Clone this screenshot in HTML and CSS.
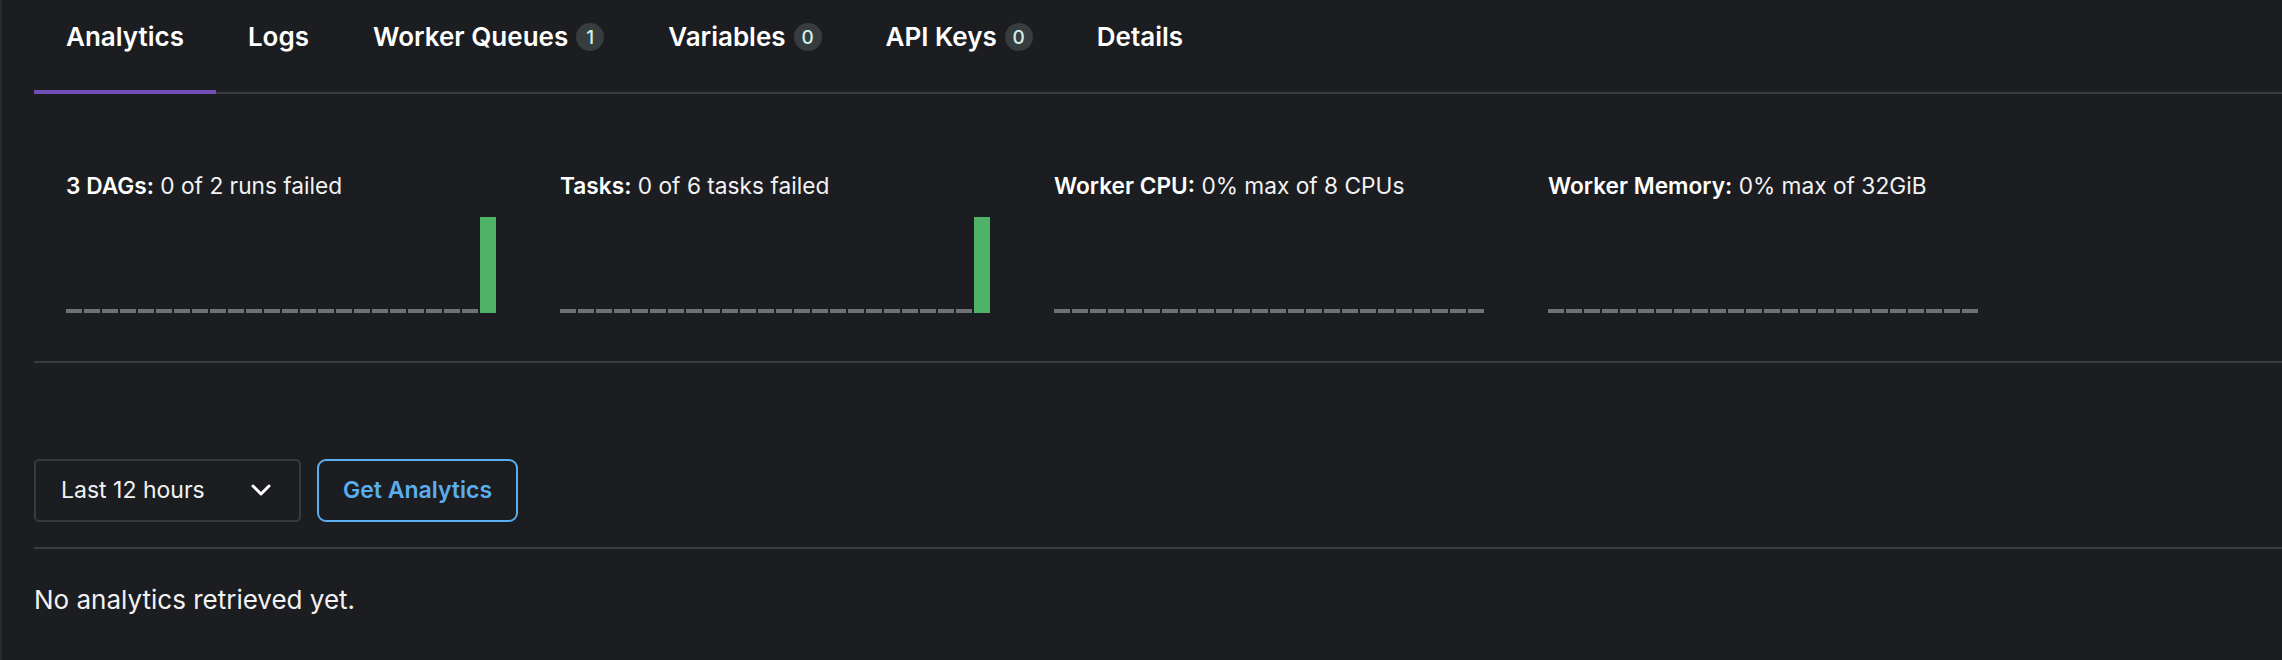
FILE: index.html
```html
<!DOCTYPE html>
<html lang="en">
<head>
<meta charset="utf-8">
<title>Analytics</title>
<link rel="stylesheet" href="styles.css">
</head>
<body>
<div class="page">
  <nav class="tabs">
    <div class="tab active">Analytics</div>
    <div class="tab">Logs</div>
    <div class="tab">Worker Queues<span class="badge">1</span></div>
    <div class="tab">Variables<span class="badge">0</span></div>
    <div class="tab">API Keys<span class="badge">0</span></div>
    <div class="tab">Details</div>
  </nav>

  <section class="charts">
    <div class="chart">
      <div class="chart-title"><b>3 DAGs:</b> 0 of 2 runs failed</div>
      <div class="bars">
        <span class="bar"></span><span class="bar"></span><span class="bar"></span><span class="bar"></span><span class="bar"></span><span class="bar"></span><span class="bar"></span><span class="bar"></span><span class="bar"></span><span class="bar"></span><span class="bar"></span><span class="bar"></span><span class="bar"></span><span class="bar"></span><span class="bar"></span><span class="bar"></span><span class="bar"></span><span class="bar"></span><span class="bar"></span><span class="bar"></span><span class="bar"></span><span class="bar"></span><span class="bar"></span><span class="bar ok"></span>
      </div>
    </div>
    <div class="chart">
      <div class="chart-title"><b>Tasks:</b> 0 of 6 tasks failed</div>
      <div class="bars">
        <span class="bar"></span><span class="bar"></span><span class="bar"></span><span class="bar"></span><span class="bar"></span><span class="bar"></span><span class="bar"></span><span class="bar"></span><span class="bar"></span><span class="bar"></span><span class="bar"></span><span class="bar"></span><span class="bar"></span><span class="bar"></span><span class="bar"></span><span class="bar"></span><span class="bar"></span><span class="bar"></span><span class="bar"></span><span class="bar"></span><span class="bar"></span><span class="bar"></span><span class="bar"></span><span class="bar ok"></span>
      </div>
    </div>
    <div class="chart">
      <div class="chart-title"><b>Worker CPU:</b> 0% max of 8 CPUs</div>
      <div class="bars">
        <span class="bar"></span><span class="bar"></span><span class="bar"></span><span class="bar"></span><span class="bar"></span><span class="bar"></span><span class="bar"></span><span class="bar"></span><span class="bar"></span><span class="bar"></span><span class="bar"></span><span class="bar"></span><span class="bar"></span><span class="bar"></span><span class="bar"></span><span class="bar"></span><span class="bar"></span><span class="bar"></span><span class="bar"></span><span class="bar"></span><span class="bar"></span><span class="bar"></span><span class="bar"></span><span class="bar"></span>
      </div>
    </div>
    <div class="chart">
      <div class="chart-title"><b>Worker Memory:</b> 0% max of 32GiB</div>
      <div class="bars">
        <span class="bar"></span><span class="bar"></span><span class="bar"></span><span class="bar"></span><span class="bar"></span><span class="bar"></span><span class="bar"></span><span class="bar"></span><span class="bar"></span><span class="bar"></span><span class="bar"></span><span class="bar"></span><span class="bar"></span><span class="bar"></span><span class="bar"></span><span class="bar"></span><span class="bar"></span><span class="bar"></span><span class="bar"></span><span class="bar"></span><span class="bar"></span><span class="bar"></span><span class="bar"></span><span class="bar"></span>
      </div>
    </div>
  </section>

  <div class="controls">
    <div class="select">
      <span>Last 12 hours</span>
      <svg class="chevron" width="20" height="12" viewBox="0 0 20 12"><path d="M2 2 L10 10 L18 2" fill="none" stroke="#ffffff" stroke-width="3" stroke-linecap="round" stroke-linejoin="round"/></svg>
    </div>
    <button class="btn">Get Analytics</button>
  </div>

  <p class="empty">No analytics retrieved yet.</p>
</div>
</body>
</html>
```

FILE: styles.css
```css
html, body {
  margin: 0;
  padding: 0;
  background: #1c1d21;
}

body {
  font-family: Inter, "Noto Sans", sans-serif;
  color: #f2f2f3;
  font-size: 23px;
  line-height: 34.5px;
}

.page {
  min-height: 660px;
  border-left: 2px solid #2b2c30;
  padding-left: 32px;
  box-sizing: border-box;
}

.tabs {
  display: flex;
  border-bottom: 2px solid #3a3b3f;
}

.tab {
  display: flex;
  align-items: center;
  padding: 19px 32px 35px;
  line-height: 36px;
  font-size: 26px;
  font-weight: 600;
  color: #ffffff;
  border-bottom: 4px solid transparent;
  margin-bottom: -2px;
}

.tab.active {
  border-bottom-color: #6f4fb5;
}

.badge {
  display: inline-flex;
  align-items: center;
  justify-content: center;
  width: 28px;
  height: 28px;
  margin-left: 8px;
  border-radius: 50%;
  background: #373c3e;
  color: #d3f1ec;
  font-size: 19px;
  font-weight: 500;
  line-height: 1;
}

.charts {
  display: flex;
  gap: 64px;
  padding: 75px 0 48px 32px;
  border-bottom: 2px solid #3a3b3f;
}

.chart {
  width: 430px;
}

.chart-title {
  white-space: nowrap;
  font-size: 22.7px;
}

.chart-title b {
  font-weight: 600;
  color: #ffffff;
}

.bars {
  display: flex;
  align-items: flex-end;
  gap: 2px;
  height: 96px;
  margin-top: 13px;
}

.bar {
  display: block;
  width: 16px;
  height: 4px;
  background: #707175;
  flex: none;
}

.bar.ok {
  height: 96px;
  background: #4eb267;
}

.controls {
  display: flex;
  gap: 16px;
  margin-top: 96px;
  padding-bottom: 25px;
  border-bottom: 2px solid #3a3b3f;
}

.select {
  box-sizing: border-box;
  width: 267px;
  height: 63px;
  border: 2px solid #393a3e;
  border-radius: 5px;
  padding: 0 28px 0 25px;
  display: flex;
  align-items: center;
  justify-content: space-between;
  color: #f2f2f3;
}

.chevron {
  display: block;
}

.btn {
  box-sizing: border-box;
  width: 201px;
  height: 63px;
  border: 2px solid #5aaef0;
  border-radius: 9px;
  background: transparent;
  color: #5aaef0;
  font-family: Inter, "Noto Sans", sans-serif;
  font-size: 23px;
  font-weight: 600;
  padding: 0;
}

.empty {
  margin: 0;
  padding-top: 33px;
  font-size: 26px;
  line-height: 36px;
}
```
